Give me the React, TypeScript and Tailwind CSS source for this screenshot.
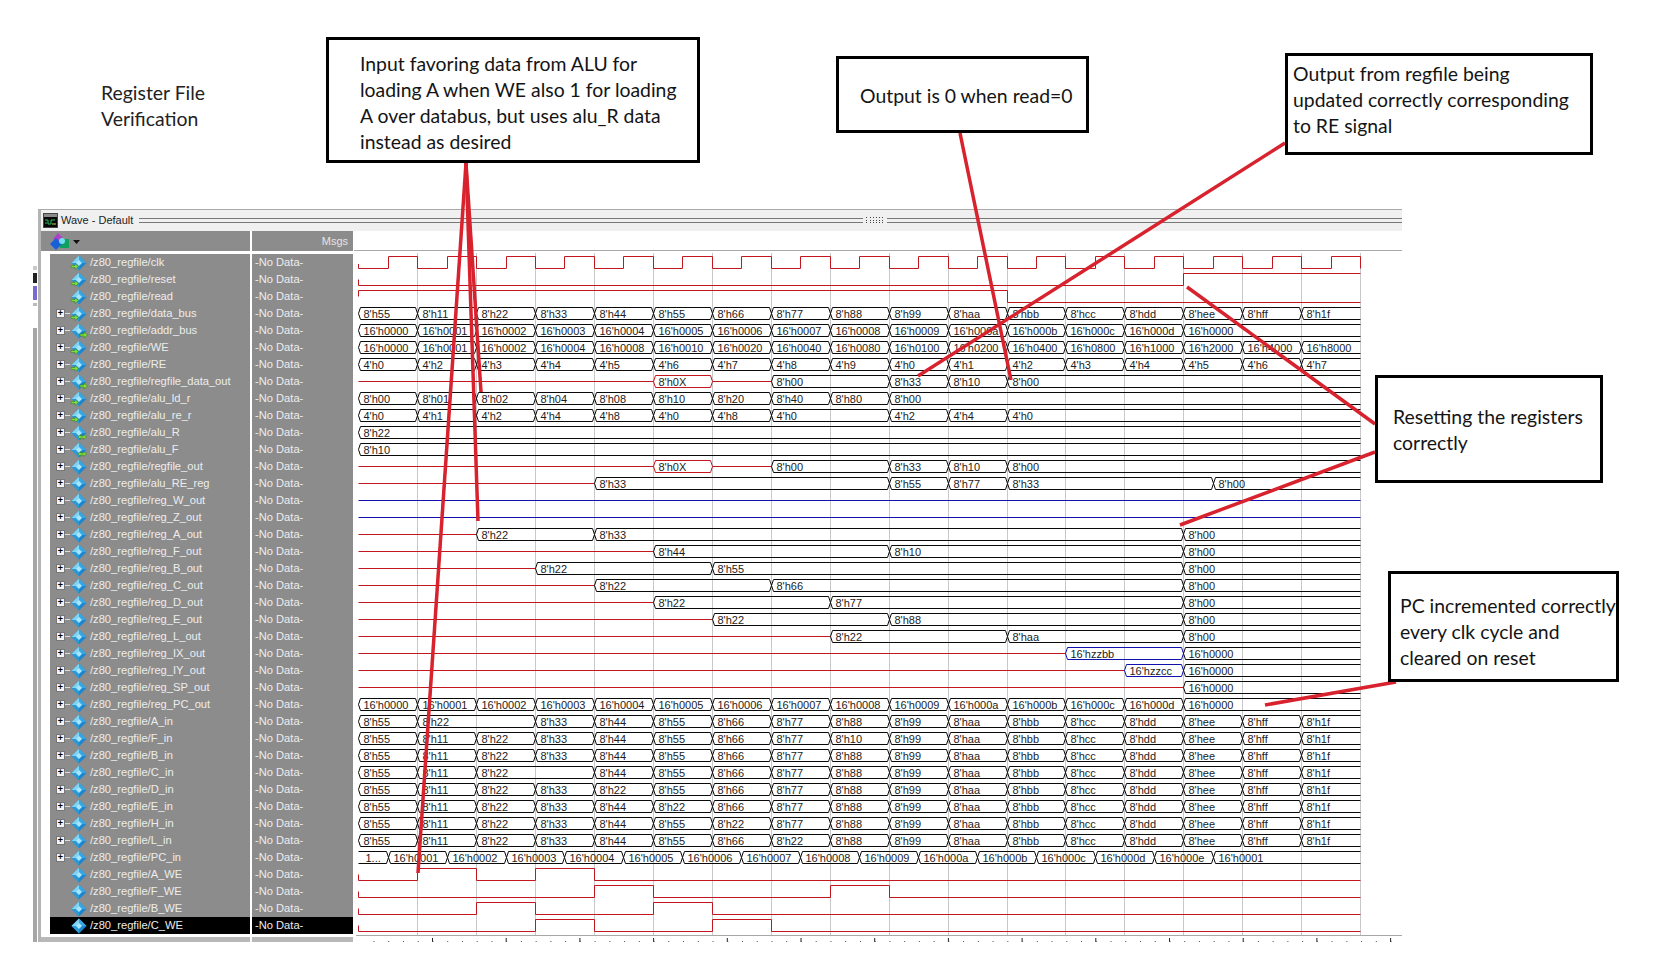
type Kind = "in" | "out" | "inout" | "none";
type Seg = [number, string];

const CYCLES = 17;
const X = (i: number) => Math.floor(358.7 + 58.94 * i) + 0.5;
const rowY = (n: number) => 262 + 17 * n;

// positional values, "_" keeps the previous value going, "~" is an undriven line
const parse = (prefix: string, values: string): Seg[] => {
  const out: Seg[] = [];
  let i = 0;
  for (const t of values.split(" ")) {
    if (t.includes(":")) {
      const [a, b] = t.split(":");
      out.push([Number(a), b === "~" ? "~" : prefix + b]);
      i = Math.floor(Number(a)) + 1;
      continue;
    }
    if (t !== "_") out.push([i, t === "~" ? "~" : prefix + t]);
    i++;
  }
  return out;
};

const pcIn: Seg[] = [
  [0, "1..."],
  ...Array.from({ length: 14 }, (_, i): Seg => [i + 0.5, "16'h000" + (i + 1).toString(16)]),
  [14.5, "16'h0001"],
];

type Row = { name: string; kind: Kind; plus?: boolean; segs?: Seg[]; clk?: boolean; high?: number[][]; line?: string };

const rows: Row[] = [
  { name: "clk", kind: "in", clk: true },
  { name: "reset", kind: "in", high: [[14, 17]] },
  { name: "read", kind: "in", high: [[0, 11]] },
  { name: "data_bus", kind: "in", plus: true, segs: parse("8'h", "55 11 22 33 44 55 66 77 88 99 aa bb cc dd ee ff 1f") },
  { name: "addr_bus", kind: "out", plus: true, segs: parse("16'h", "0000 0001 0002 0003 0004 0005 0006 0007 0008 0009 000a 000b 000c 000d 0000") },
  { name: "WE", kind: "in", plus: true, segs: parse("16'h", "0000 0001 0002 0004 0008 0010 0020 0040 0080 0100 0200 0400 0800 1000 2000 4000 8000") },
  { name: "RE", kind: "in", plus: true, segs: parse("4'h", "0 2 3 4 5 6 7 8 9 0 1 2 3 4 5 6 7") },
  { name: "regfile_data_out", kind: "out", plus: true, segs: parse("8'h", "~ _ _ _ _ 0X ~ 00 _ 33 10 00") },
  { name: "alu_ld_r", kind: "in", plus: true, segs: parse("8'h", "00 01 02 04 08 10 20 40 80 00") },
  { name: "alu_re_r", kind: "in", plus: true, segs: parse("4'h", "0 1 2 4 8 0 8 0 _ 2 4 0") },
  { name: "alu_R", kind: "inout", plus: true, segs: parse("8'h", "22") },
  { name: "alu_F", kind: "inout", plus: true, segs: parse("8'h", "10") },
  { name: "regfile_out", kind: "none", plus: true, segs: parse("8'h", "~ _ _ _ _ 0X ~ 00 _ 33 10 00") },
  { name: "alu_RE_reg", kind: "none", plus: true, segs: parse("8'h", "~ _ _ _ 33 _ _ _ _ 55 77 33 14.5:00") },
  { name: "reg_W_out", kind: "none", plus: true, line: "#1010b0" },
  { name: "reg_Z_out", kind: "none", plus: true, line: "#1010b0" },
  { name: "reg_A_out", kind: "none", plus: true, segs: parse("8'h", "~ _ 22 _ 33 14:00") },
  { name: "reg_F_out", kind: "none", plus: true, segs: parse("8'h", "~ _ _ _ _ 44 9:10 14:00") },
  { name: "reg_B_out", kind: "none", plus: true, segs: parse("8'h", "~ _ _ 22 _ _ 55 14:00") },
  { name: "reg_C_out", kind: "none", plus: true, segs: parse("8'h", "~ _ _ _ 22 _ _ 66 14:00") },
  { name: "reg_D_out", kind: "none", plus: true, segs: parse("8'h", "~ _ _ _ _ 22 _ _ 77 14:00") },
  { name: "reg_E_out", kind: "none", plus: true, segs: parse("8'h", "~ _ _ _ _ _ 22 _ _ 88 14:00") },
  { name: "reg_L_out", kind: "none", plus: true, segs: parse("8'h", "~ 8:22 11:aa 14:00") },
  { name: "reg_IX_out", kind: "none", plus: true, segs: parse("16'h", "~ 12:zzbb 14:0000") },
  { name: "reg_IY_out", kind: "none", plus: true, segs: parse("16'h", "~ 13:zzcc 14:0000") },
  { name: "reg_SP_out", kind: "none", plus: true, segs: parse("16'h", "~ 14:0000") },
  { name: "reg_PC_out", kind: "none", plus: true, segs: parse("16'h", "0000 0001 0002 0003 0004 0005 0006 0007 0008 0009 000a 000b 000c 000d 0000") },
  { name: "A_in", kind: "none", plus: true, segs: parse("8'h", "55 22 _ 33 44 55 66 77 88 99 aa bb cc dd ee ff 1f") },
  { name: "F_in", kind: "none", plus: true, segs: parse("8'h", "55 11 22 33 44 55 66 77 10 99 aa bb cc dd ee ff 1f") },
  { name: "B_in", kind: "none", plus: true, segs: parse("8'h", "55 11 22 33 44 55 66 77 88 99 aa bb cc dd ee ff 1f") },
  { name: "C_in", kind: "none", plus: true, segs: parse("8'h", "55 11 22 _ 44 55 66 77 88 99 aa bb cc dd ee ff 1f") },
  { name: "D_in", kind: "none", plus: true, segs: parse("8'h", "55 11 22 33 22 55 66 77 88 99 aa bb cc dd ee ff 1f") },
  { name: "E_in", kind: "none", plus: true, segs: parse("8'h", "55 11 22 33 44 22 66 77 88 99 aa bb cc dd ee ff 1f") },
  { name: "H_in", kind: "none", plus: true, segs: parse("8'h", "55 11 22 33 44 55 22 77 88 99 aa bb cc dd ee ff 1f") },
  { name: "L_in", kind: "none", plus: true, segs: parse("8'h", "55 11 22 33 44 55 66 22 88 99 aa bb cc dd ee ff 1f") },
  { name: "PC_in", kind: "none", plus: true, segs: pcIn },
  { name: "A_WE", kind: "none", high: [[1, 2], [3, 4]] },
  { name: "F_WE", kind: "none", high: [[4, 5], [8, 9]] },
  { name: "B_WE", kind: "none", high: [[2, 3], [5, 6]] },
  { name: "C_WE", kind: "none", high: [[3, 4], [6, 7]] },
];

const RED = "#c4161f";
const BLUE = "#1010b0";
const NOTE_RED = "#d8222e";

function SignalIcon({ kind }: { kind: Kind }) {
  return (
    <svg width="18" height="16" viewBox="0 0 18 16" className="shrink-0">
      <polygon points="9,0.500 16.500,8 9,15.500 1.500,8" fill="#1c86d0" />
      <polygon points="9,0.500 1.500,8 9,8" fill="#7ed4f2" />
      <polygon points="9,0.500 16.500,8 9,8" fill="#37a6e2" />
      <polygon points="1.500,8 9,15.500 9,8" fill="#2b9ad8" />
      <polygon points="9,5 12,8 9,11 6,8" fill="#a8e6fb" />
      {kind === "in" && <path d="M1 10.500h4V8.500l3.500 3-3.500 3v-2H1z" fill="#7ee03c" stroke="#2c7a10" strokeWidth="0.5" />}
      {kind === "out" && <path d="M10 11h4V9l3.500 3-3.500 3v-2h-4z" fill="#7ee03c" stroke="#2c7a10" strokeWidth="0.5" />}
      {kind === "inout" && <path d="M8 12l2.500-2.500v1.500h3V9.500L16.500 12 13.500 14.500V13h-3v1.500z" fill="#7ee03c" stroke="#2c7a10" strokeWidth="0.5" />}
    </svg>
  );
}

function TitleIcon() {
  return (
    <svg width="15" height="15" viewBox="0 0 15 15" className="shrink-0">
      <rect x="0.5" y="0.5" width="14" height="14" fill="#8a8a8a" stroke="#444" />
      <rect x="1" y="4" width="13" height="10" fill="#050505" />
      <path d="M2 7h3v4h3V7h4M2 10h2" stroke="#22c060" fill="none" />
      <path d="M9 11h4" stroke="#d0d040" fill="none" />
    </svg>
  );
}

function AddIcon() {
  return (
    <svg width="20" height="17" viewBox="0 0 20 17" className="shrink-0">
      <rect x="10" y="6" width="9" height="9" fill="#0fa060" />
      <polygon points="8,0 14,6 8,9 3,6" fill="#b040c8" />
      <polygon points="6,5 12,11 6,17 0,11" fill="#1860d8" />
      <circle cx="12" cy="8" r="3" fill="#70e0f0" />
    </svg>
  );
}

function digitalPath(c: number, high: number[][]) {
  const hi = c - 5.5;
  const lo = c + 6.5;
  let level = high[0][0] === 0 ? hi : lo;
  let d = `M${X(0)} ${c + 0.5}L${X(0)} ${level}`;
  for (const [a, b] of high) {
    if (a > 0) d += `L${X(a)} ${lo}L${X(a)} ${hi}`;
    if (b < CYCLES) {
      d += `L${X(b)} ${hi}L${X(b)} ${lo}`;
      level = lo;
    } else {
      level = hi;
    }
  }
  d += `L${X(CYCLES)} ${level}`;
  return d;
}

function clockPath(c: number) {
  const hi = c - 5.5;
  const lo = c + 6.5;
  let d = `M${X(0)} ${c + 2}L${X(0)} ${lo}`;
  for (let i = 0; i < CYCLES; i++) {
    d += `L${X(i + 0.5)} ${lo}L${X(i + 0.5)} ${hi}L${X(i + 1)} ${hi}L${X(i + 1)} ${lo}`;
  }
  return d;
}

function BusRow({ c, segs }: { c: number; segs: Seg[] }) {
  const top = c - 5.5;
  const bottom = c + 6.5;
  const mid = c + 0.5;
  return (
    <g>
      {segs.map(([s, label], i) => {
        const end = i + 1 < segs.length ? segs[i + 1][0] : CYCLES;
        const x0 = X(s);
        const x1 = X(end);
        if (label === "~") return <line key={s} x1={x0} x2={x1} y1={mid} y2={mid} stroke={RED} />;
        const color = label.includes("X") ? RED : label.includes("z") ? BLUE : "#0a0a0a";
        // the PC_in value that began before the window has no opening edge
        const open = label === "1...";
        const left = open ? `M${x0} ${top}` : `L${x0 + 2} ${top}L${x0} ${mid}L${x0 + 2} ${bottom}`;
        const d = open
          ? `M${x0} ${bottom}L${x1 - 2} ${bottom}L${x1} ${mid}L${x1 - 2} ${top}L${x0} ${top}`
          : end < CYCLES
            ? `M${x1 - 2} ${top}${left}L${x1 - 2} ${bottom}L${x1} ${mid}Z`
            : `M${x1} ${top}${left}L${x1} ${bottom}`;
        return (
          <g key={s}>
            <path d={d} fill="none" stroke={color} />
            <text x={x0 + (open ? 7 : 5)} y={c + 4.5} fill="#1c1c1c" className="text-[11px]">
              {label}
            </text>
          </g>
        );
      })}
    </g>
  );
}

function WaveCanvas() {
  const majors = Array.from({ length: 14 }, (_, i) => 432.5 + 73.7 * i);
  const dots = Array.from({ length: 72 }, (_, i) => 373.5 + 14.74 * i);
  return (
    <svg width="1048" height="711" viewBox="354 231 1048 711" className="block">
      <line x1="354" x2="1402" y1="250.500" y2="250.500" stroke="#a8a8a8" />
      {Array.from({ length: CYCLES }, (_, i) => (
        <line key={i} x1={X(i + 1)} x2={X(i + 1)} y1="253" y2="935" stroke="#c9c9c9" />
      ))}
      {rows.map((r, n) => {
        const c = rowY(n);
        if (r.clk) return <path key={r.name} d={clockPath(c)} fill="none" stroke={RED} />;
        if (r.high) return <path key={r.name} d={digitalPath(c, r.high)} fill="none" stroke={RED} />;
        if (r.line) return <line key={r.name} x1={X(0)} x2={X(CYCLES)} y1={c + 0.5} y2={c + 0.5} stroke={r.line} />;
        return <BusRow key={r.name} c={c} segs={r.segs ?? []} />;
      })}
      <line x1="356" x2="1402" y1="935.500" y2="935.500" stroke="#a8a8a8" />
      {majors.map((x) => (
        <line key={x} x1={x} x2={x} y1="938" y2="942" stroke="#222" />
      ))}
      {dots.map((x) => (
        <rect key={x} x={x} y="941" width="1" height="1" fill="#555" />
      ))}
    </svg>
  );
}

function NameRow({ row, selected }: { row: Row; selected: boolean }) {
  return (
    <div className={`flex h-[17px] items-center pl-[6px] text-[11.150px] text-[#ececec] ${selected ? "bg-black" : ""}`}>
      <span className="flex w-[14px] shrink-0 items-center">
        {row.plus && (
          <>
            <span className="flex h-[9px] w-[9px] shrink-0 items-center justify-center border border-[#777] bg-[#f4f4f4] text-[9px] leading-none font-bold text-black">
              +
            </span>
            <span className="h-px w-[5px] bg-[#ddd]" />
          </>
        )}
      </span>
      <SignalIcon kind={row.kind} />
      <span className="ml-[2px] whitespace-nowrap">/z80_regfile/{row.name}</span>
    </div>
  );
}

function Note({ className, children }: { className: string; children: React.ReactNode }) {
  return (
    <div className={`absolute border-[3px] border-black bg-white font-['Lato',sans-serif] text-[19.400px] leading-[26px] text-[#141414] ${className}`}>
      {children}
    </div>
  );
}

export default function App() {
  return (
    <div className="relative h-[980px] w-[1668px] overflow-hidden bg-white font-['Liberation_Sans',sans-serif]">
      {/* sliver of the window behind */}
      <div className="absolute top-[263px] left-[33px] flex h-[679px] w-[4px] flex-col">
        <div className="mt-[3px] h-[4px] bg-[#c8c8c8]" />
        <div className="mt-[3px] h-[10px] bg-[#222]" />
        <div className="mt-[3px] h-[14px] bg-[#7a6ad0]" />
        <div className="mt-[3px] h-[3px] bg-[#bbb]" />
        <div className="mt-[22px] flex-1 bg-[#a6a6a6]" />
      </div>

      <div className="pt-[209px] pl-[38px]">
        <div className="h-[733px] w-[1364px] border-t border-l-[3px] border-t-[#aaa] border-l-[#b4b4b4] bg-white">
          {/* title bar */}
          <div className="flex h-[21px] items-center gap-[3px] bg-[#f0f0f0] pl-[2px] text-[11px] text-[#222]">
            <TitleIcon />
            <span className="whitespace-nowrap">Wave - Default</span>
            <div className="ml-[3px] h-[5px] w-[724px] border-y border-[#777]" />
            <div className="grid h-[7px] w-[18px] grid-cols-6 gap-px">
              {Array.from({ length: 18 }, (_, i) => (
                <span key={i} className="h-px w-px bg-[#444]" />
              ))}
            </div>
            <div className="h-[5px] flex-1 border-y border-[#777]" />
          </div>

          <div className="flex">
            {/* signal names */}
            <div className="flex w-[209px] flex-col">
              <div className="flex h-[20px] items-center gap-[3px] bg-[#8c8c8c] pl-[9px]">
                <AddIcon />
                <svg width="7" height="4" viewBox="0 0 7 4" className="mt-[2px]">
                  <polygon points="0,0 7,0 3.500,4" fill="#111" />
                </svg>
              </div>
              <div className="h-[3px]" />
              <div className="ml-[9px] bg-[#8c8c8c]">
                {rows.map((r, i) => (
                  <NameRow key={r.name} row={r} selected={i === rows.length - 1} />
                ))}
              </div>
              <div className="mt-[3px] h-[5px] bg-[#b8b8b8]" />
            </div>

            <div className="w-[2px]" />

            {/* value column */}
            <div className="flex w-[101px] flex-col">
              <div className="flex h-[20px] items-center justify-end bg-[#8c8c8c] pr-[5px] text-[11px] text-[#e4e4e4]">Msgs</div>
              <div className="h-[3px]" />
              <div className="bg-[#8c8c8c]">
                {rows.map((r, i) => (
                  <div
                    key={r.name}
                    className={`flex h-[17px] items-center pl-[3px] text-[11.150px] text-[#ececec] ${i === rows.length - 1 ? "bg-black" : ""}`}
                  >
                    -No Data-
                  </div>
                ))}
              </div>
              <div className="mt-[3px] h-[5px] bg-[#b8b8b8]" />
            </div>

            <div className="w-px" />
            <WaveCanvas />
          </div>
        </div>
      </div>

      {/* annotations */}
      <svg width="1668" height="980" viewBox="0 0 1668 980" className="pointer-events-none absolute inset-0">
        <g stroke={NOTE_RED} strokeWidth="3.500" fill="none">
          <line x1="466" y1="163" x2="481" y2="392" />
          <line x1="466" y1="163" x2="478" y2="521" />
          <line x1="466" y1="163" x2="418" y2="873" />
          <line x1="960" y1="133" x2="1011" y2="380" />
          <line x1="1285" y1="143" x2="918" y2="376" />
          <line x1="1375" y1="424" x2="1187" y2="287" />
          <line x1="1375" y1="452" x2="1180" y2="525" />
          <line x1="1396" y1="682" x2="1265" y2="705" />
        </g>
      </svg>

      <p className="absolute top-[80px] left-[101px] font-['Lato',sans-serif] text-[19.400px] leading-[26px] text-[#222]">
        Register File
        <br />
        Verification
      </p>

      <Note className="top-[37px] left-[326px] h-[126px] w-[374px] pt-[11px] pl-[31px]">
        Input favoring data from ALU for
        <br />
        loading A when WE also 1 for loading
        <br />
        A over databus, but uses alu_R data
        <br />
        instead as desired
      </Note>
      <Note className="top-[56px] left-[836px] h-[77px] w-[253px] pt-[24px] pl-[21px]">Output is 0 when read=0</Note>
      <Note className="top-[53px] left-[1285px] h-[102px] w-[308px] pt-[5px] pl-[5px]">
        Output from regfile being
        <br />
        updated correctly corresponding
        <br />
        to RE signal
      </Note>
      <Note className="top-[375px] left-[1375px] h-[108px] w-[228px] pt-[26px] pl-[15px]">
        Resetting the registers
        <br />
        correctly
      </Note>
      <Note className="top-[571px] left-[1388px] h-[111px] w-[231px] pt-[19px] pl-[9px]">
        PC incremented correctly
        <br />
        every clk cycle and
        <br />
        cleared on reset
      </Note>
    </div>
  );
}
